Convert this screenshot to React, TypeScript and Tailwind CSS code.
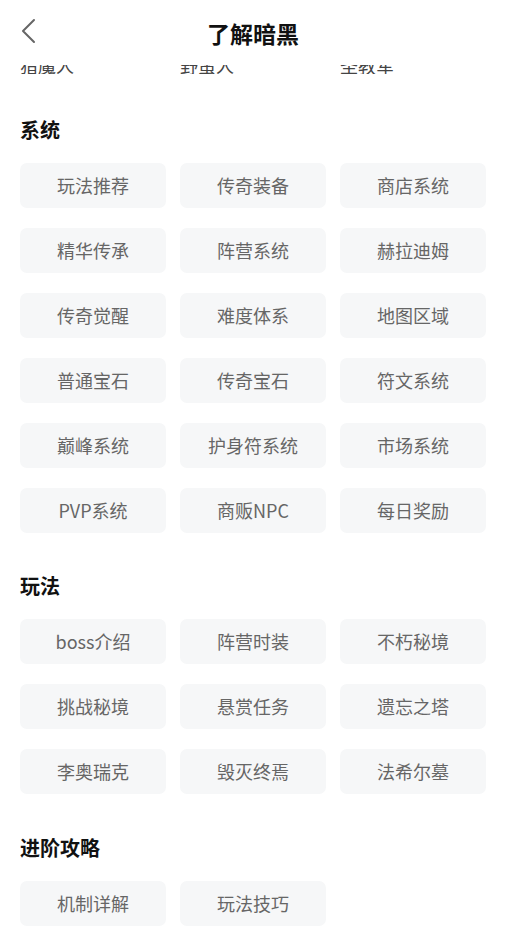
const systems = [
  '玩法推荐', '传奇装备', '商店系统',
  '精华传承', '阵营系统', '赫拉迪姆',
  '传奇觉醒', '难度体系', '地图区域',
  '普通宝石', '传奇宝石', '符文系统',
  '巅峰系统', '护身符系统', '市场系统',
  'PVP系统', '商贩NPC', '每日奖励',
]

const gameplay = [
  'boss介绍', '阵营时装', '不朽秘境',
  '挑战秘境', '悬赏任务', '遗忘之塔',
  '李奥瑞克', '毁灭终焉', '法希尔墓',
]

const advanced = ['机制详解', '玩法技巧']

function Section({ title, items, className }: { title: string; items: string[]; className: string }) {
  return (
    <section className={className}>
      <h2 className="px-5 text-[20px] leading-[26px] font-bold text-[#111]">{title}</h2>
      <div className="mt-[20px] grid grid-cols-3 gap-x-[14px] gap-y-[20px] px-5">
        {items.map((item) => (
          <button
            key={item}
            type="button"
            className="h-[45px] rounded-[7px] bg-[#f6f7f8] text-[18px] text-[#666]"
          >
            {item}
          </button>
        ))}
      </div>
    </section>
  )
}

export default function App() {
  return (
    <div
      className="w-[506px] h-[946px] overflow-hidden bg-white"
      style={{ fontFamily: '"Noto Sans CJK SC", "Noto Sans", sans-serif' }}
    >
      <header className="relative flex h-[58px] items-center justify-center">
        <button type="button" className="absolute left-[18px] top-[17px]" aria-label="返回">
          <svg width="22" height="28" viewBox="0 0 22 28" fill="none">
            <path d="M16 3 L5 14 L16 25" stroke="#666" strokeWidth="2" strokeLinecap="round" strokeLinejoin="round" />
          </svg>
        </button>
        <h1 className="text-[23px] font-bold text-[#111] mt-[8px]">了解暗黑</h1>
      </header>

      <div className="mt-[7px] h-[9px] overflow-hidden">
        <div className="-mt-[12px] grid grid-cols-3 gap-x-[14px] px-5 text-[18px] leading-[24px] text-[#444]">
          <span>猎魔人</span>
          <span>野蛮人</span>
          <span>圣教军</span>
        </div>
      </div>

      <Section title="系统" items={systems} className="mt-[43px]" />
      <Section title="玩法" items={gameplay} className="mt-[40px]" />
      <Section title="进阶攻略" items={advanced} className="mt-[41px]" />
    </div>
  )
}
